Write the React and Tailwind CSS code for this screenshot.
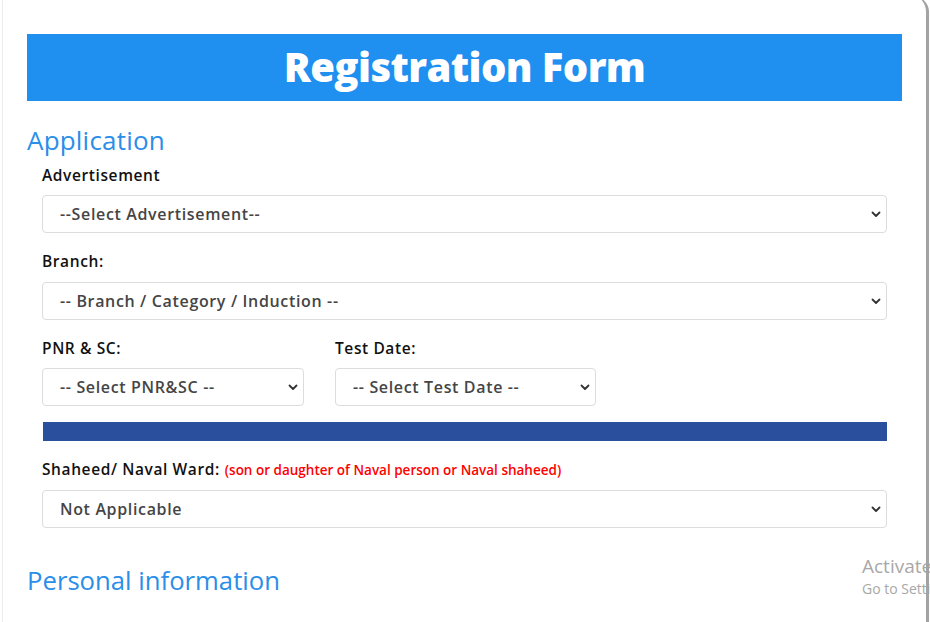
import React from "react";

const font = { fontFamily: '"Open Sans", "Noto Sans", sans-serif' };

function Chevron() {
  return (
    <svg width="10" height="7" viewBox="0 0 10 7" className="shrink-0">
      <path d="M1.5 1.5 L5 5 L8.5 1.5" fill="none" stroke="#333" strokeWidth="1.8" strokeLinecap="round" strokeLinejoin="round" />
    </svg>
  );
}

function Select({ text, className = "" }) {
  return (
    <div className={`h-[38px] flex items-center justify-between pl-[17px] pr-[5px] border border-[#dcdcdc] rounded-[4px] bg-white ${className}`}>
      <span className="text-[16px] font-semibold text-[#454545] tracking-[0.65px] whitespace-nowrap">{text}</span>
      <Chevron />
    </div>
  );
}

function Label({ children, className = "" }) {
  return <div className={`text-[15.5px] font-semibold text-[#111] leading-[20px] tracking-[0.6px] whitespace-nowrap ${className}`}>{children}</div>;
}

export default function App() {
  return (
    <div className="w-[930px] h-[622px] overflow-hidden bg-white relative" style={font}>
      <div className="absolute left-[862px] top-[557px] text-[#a8a8a8] leading-none z-0 whitespace-nowrap" style={{ fontFamily: '"Open Sans", sans-serif' }}>
        <div className="text-[19px]">Activate Windows</div>
        <div className="text-[14px] mt-[6px]">Go to Settings to activate Windows.</div>
      </div>
      <div className="relative z-10 ml-[2px] w-[927px] h-[640px] mt-[-4px] border-l border-l-[#ececec] border-r-[3px] border-r-[#a3a3a3] rounded-tr-[16px] rounded-tl-[6px] pl-[24px] pr-[24px] pt-[38px] bg-transparent">
        <div className="h-[67px] bg-[#1f8ff0] flex items-center justify-center">
          <h1 className="text-white font-extrabold text-[40px] leading-none tracking-[-0.6px] pb-[2px]">Registration Form</h1>
        </div>
        <h2 className="text-[#2b8ee8] text-[26px] font-medium leading-[32px] tracking-[0.2px] mt-[23px]">Application</h2>
        <div className="pl-[15px] pr-[15px]">
          <Label className="mt-[9px]">Advertisement</Label>
          <Select text="--Select Advertisement--" className="mt-[10px]" />
          <Label className="mt-[18px]">Branch:</Label>
          <Select text="-- Branch / Category / Induction --" className="mt-[11px]" />
          <div className="flex gap-[31px] mt-[18px]">
            <div className="w-[262px]">
              <Label>PNR &amp; SC:</Label>
              <Select text="-- Select PNR&SC --" className="mt-[10px]" />
            </div>
            <div className="w-[261px]">
              <Label>Test Date:</Label>
              <Select text="-- Select Test Date --" className="mt-[10px]" />
            </div>
          </div>
          <div className="h-[19px] bg-[#2a4f9c] mt-[16px] ml-[1px]" />
          <div className="mt-[18px] flex items-baseline gap-[5px]">
            <Label>Shaheed/ Naval Ward:</Label>
            <span className="text-[13.5px] font-semibold text-[#ff0000] whitespace-nowrap">(son or daughter of Naval person or Naval shaheed)</span>
          </div>
          <Select text="Not Applicable" className="mt-[10px]" />
        </div>
        <h2 className="text-[#2b8ee8] text-[25.7px] font-medium leading-[32px] mt-[37px]">Personal information</h2>
      </div>
    </div>
  );
}
